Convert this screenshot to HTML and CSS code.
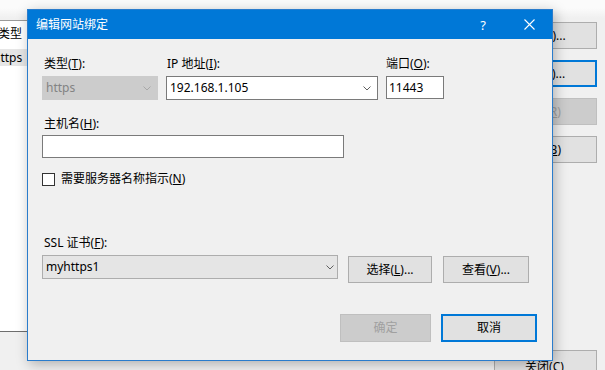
FILE: index.html
```html
<!DOCTYPE html>
<html lang="zh-CN">
<head>
<meta charset="utf-8">
<title>编辑网站绑定</title>
<link rel="stylesheet" href="styles.css">
</head>
<body>
<div class="bgwin">
  <div class="list">
    <div class="list-head">类型</div>
    <div class="list-row">https</div>
  </div>
  <div class="side">
    <div class="btn sbtn">添加(<u>A</u>)...</div>
    <div class="btn sbtn focus">编辑(<u>E</u>)...</div>
    <div class="btn sbtn disabled">删除(<u>R</u>)</div>
    <div class="btn sbtn">浏览(<u>B</u>)</div>
    <div class="btn sbtn closebtn">关闭(<u>C</u>)</div>
  </div>
</div>

<div class="dialog">
  <div class="titlebar">
    <span class="title">编辑网站绑定</span>
    <span class="tb-btn help">?</span>
    <span class="tb-btn close">
      <svg width="11" height="11" viewBox="0 0 11 11"><path d="M0.5 0.5 L10.5 10.5 M10.5 0.5 L0.5 10.5" stroke="#fff" stroke-width="1.1" fill="none"/></svg>
    </span>
  </div>
  <div class="content">
    <div class="row1">
      <div class="field f-type">
        <div class="label">类型(<u>T</u>):</div>
        <div class="combo combo-disabled"><span class="ctext">https</span><svg class="chev" width="8" height="5" viewBox="0 0 8 5"><path d="M0.5 0.5 L4 4 L7.5 0.5" stroke="#a8a8a8" fill="none"/></svg></div>
      </div>
      <div class="field f-ip">
        <div class="label">IP 地址(<u>I</u>):</div>
        <div class="combo"><span class="ctext">192.168.1.105</span><svg class="chev" width="8" height="5" viewBox="0 0 8 5"><path d="M0.5 0.5 L4 4 L7.5 0.5" stroke="#606060" fill="none"/></svg></div>
      </div>
      <div class="field f-port">
        <div class="label">端口(<u>O</u>):</div>
        <div class="textbox port">11443</div>
      </div>
    </div>

    <div class="field f-host">
      <div class="label">主机名(<u>H</u>):</div>
      <div class="textbox host"></div>
    </div>

    <div class="check-row">
      <span class="checkbox"></span>
      <span class="check-label">需要服务器名称指示(<u>N</u>)</span>
    </div>

    <div class="field f-ssl">
      <div class="label">SSL 证书(<u>F</u>):</div>
      <div class="ssl-row">
        <div class="combo combo-ro"><span class="ctext">myhttps1</span><svg class="chev" width="8" height="5" viewBox="0 0 8 5"><path d="M0.5 0.5 L4 4 L7.5 0.5" stroke="#606060" fill="none"/></svg></div>
        <div class="btn b-select">选择(<u>L</u>)...</div>
        <div class="btn b-view">查看(<u>V</u>)...</div>
      </div>
    </div>

    <div class="footer">
      <div class="btn disabled b-ok">确定</div>
      <div class="btn default b-cancel">取消</div>
    </div>
  </div>
</div>
</body>
</html>
```

FILE: styles.css
```css
html, body {
  margin: 0;
  padding: 0;
}
body {
  width: 605px;
  height: 370px;
  overflow: hidden;
  position: relative;
  background: linear-gradient(#fbfbfb 0px, #fbfbfb 8px, #f0f0f0 18px, #f0f0f0 100%);
  font-family: "Noto Sans", "Noto Sans CJK SC", sans-serif;
  font-size: 12px;
  line-height: 16px;
  color: #000;
}
u {
  text-decoration: underline;
  text-underline-offset: 1px;
  text-decoration-thickness: 1px;
}

/* background window */
.bgwin {
  display: flex;
  height: 370px;
}
.list {
  width: 480px;
  margin-top: 20px;
  height: 312px;
  margin-left: -10px;
  background: #fff;
  border-top: 1px solid #9a9a9a;
  border-bottom: 1px solid #6e6e6e;
  box-sizing: border-box;
}
.list-head {
  padding: 5px 0 0 8px;
  height: 24px;
  box-sizing: border-box;
}
.list-row {
  margin-top: 4px;
  height: 17px;
  line-height: 17px;
  padding-left: 3px;
  background: #e6e6e6;
}
.side {
  margin-left: auto;
  margin-right: 8px;
  width: 103px;
  display: flex;
  flex-direction: column;
  gap: 11px;
  padding-top: 22px;
}
.btn {
  display: flex;
  align-items: center;
  justify-content: center;
  box-sizing: border-box;
  background: #e1e1e1;
  border: 1px solid #adadad;
  white-space: nowrap;
}
.sbtn {
  height: 27px;
  flex-shrink: 0;
  padding-right: 8px;
}
.sbtn.focus {
  border: 2px solid #0078d7;
}
.btn.disabled {
  background: #cccccc;
  border-color: #bfbfbf;
  color: #a0a0a0;
}
.sbtn.closebtn {
  margin-top: 176px;
  height: 34px;
  padding-right: 2px;
}

/* dialog */
.dialog {
  position: absolute;
  left: 27px;
  top: 9px;
  width: 526px;
  height: 352px;
  box-sizing: border-box;
  border: 1px solid #2a7ccc;
  background: #f0f0f0;
  box-shadow: 2px 3px 12px rgba(0, 0, 0, 0.28);
}
.titlebar {
  height: 29px;
  background: #0078d7;
  display: flex;
  align-items: center;
  color: #fff;
}
.title {
  flex: 1;
  padding-left: 8px;
}
.tb-btn {
  width: 46px;
  height: 29px;
  display: flex;
  align-items: center;
  justify-content: center;
}
.help {
  font-size: 13px;
}
.close svg {
  display: block;
}

.content {
  padding: 17px 15px 0 14px;
}
.label {
  height: 16px;
  padding-left: 2px;
  margin-bottom: 4px;
}
.row1 {
  display: flex;
  gap: 8px;
}
.f-type {
  width: 116px;
}
.f-ip {
  width: 212px;
}
.f-ip .label {
  padding-left: 1px;
}
.f-port {
  width: 58px;
}
.f-port .label {
  padding-left: 0;
}
.combo {
  height: 24px;
  box-sizing: border-box;
  border: 1px solid #7a7a7a;
  background: #fff;
  display: flex;
  align-items: center;
  padding-left: 3px;
}
.ctext {
  flex: 1;
}
.chev {
  margin-right: 6px;
  display: block;
}
.combo-disabled {
  background: #cccccc;
  border-color: #cccccc;
  color: #838383;
}
.combo-ro {
  width: 296px;
  background: #e5e5e5;
  border-color: #adadad;
}
.combo-ro .chev {
  margin-right: 3px;
}
.textbox {
  height: 23px;
  box-sizing: border-box;
  border: 1px solid #7a7a7a;
  background: #fff;
  display: flex;
  align-items: center;
  padding-left: 2px;
}
.f-host {
  margin-top: 16px;
}
.f-host .label {
  margin-bottom: 3px;
}
.host {
  width: 302px;
}
.check-row {
  margin-top: 13px;
  height: 16px;
  display: flex;
  align-items: center;
}
.checkbox {
  width: 13px;
  height: 13px;
  box-sizing: border-box;
  border: 1px solid #333;
  background: #fff;
  margin-right: 6px;
}
.f-ssl {
  margin-top: 48px;
}
.ssl-row {
  display: flex;
  align-items: flex-start;
}
.b-select {
  margin-top: 1px;
  margin-left: 10px;
  width: 84px;
  height: 27px;
}
.b-view {
  margin-top: 1px;
  margin-left: 11px;
  width: 86px;
  height: 27px;
}
.footer {
  margin-top: 31px;
  display: flex;
  justify-content: flex-end;
  gap: 10px;
}
.b-ok {
  width: 91px;
  height: 28px;
}
.b-cancel {
  width: 96px;
  height: 28px;
}
.btn.default {
  border: 2px solid #0078d7;
}
```
